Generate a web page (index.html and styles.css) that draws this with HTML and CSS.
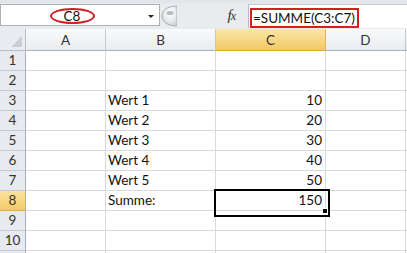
FILE: index.html
```html
<!DOCTYPE html>
<html>
<head>
<meta charset="utf-8">
<link rel="stylesheet" href="styles.css">
</head>
<body>
<div class="app">
  <div class="toolbar">
    <div class="namebox">
      <div class="ref-wrap"><span class="ref">C8</span></div>
      <span class="arrow"></span>
    </div>
    <div class="grip">
      <svg width="17" height="22" viewBox="0 0 17 22">
        <defs>
          <radialGradient id="g" cx="0.55" cy="0.35" r="0.7">
            <stop offset="0" stop-color="#ffffff"/>
            <stop offset="0.6" stop-color="#e7e9ec"/>
            <stop offset="1" stop-color="#c9ced4"/>
          </radialGradient>
        </defs>
        <path d="M17 1 C7 1 2 5.5 2 11 C2 16.5 7 21 17 21 Z" fill="url(#g)" stroke="#a9b0b8" stroke-width="1"/>
        <ellipse cx="10" cy="8" rx="3.5" ry="2" fill="#b7bcc3"/>
      </svg>
    </div>
    <div class="fxarea"><span class="fx">f<span class="fxx">x</span></span></div>
    <div class="formula"><span class="ftext">=SUMME(C3:C7)</span></div>
  </div>
  <div class="sheet">
    <div class="corner"><span class="tri"></span></div>
    <div class="ch">A</div>
    <div class="ch">B</div>
    <div class="ch sel">C</div>
    <div class="ch">D</div>
    <div class="ch">&nbsp;</div>

    <div class="rh">1</div><div class="c"></div><div class="c"></div><div class="c"></div><div class="c"></div><div class="c"></div>
    <div class="rh">2</div><div class="c"></div><div class="c"></div><div class="c"></div><div class="c"></div><div class="c"></div>
    <div class="rh">3</div><div class="c"></div><div class="c">Wert 1</div><div class="c num">10</div><div class="c"></div><div class="c"></div>
    <div class="rh">4</div><div class="c"></div><div class="c">Wert 2</div><div class="c num">20</div><div class="c"></div><div class="c"></div>
    <div class="rh">5</div><div class="c"></div><div class="c">Wert 3</div><div class="c num">30</div><div class="c"></div><div class="c"></div>
    <div class="rh">6</div><div class="c"></div><div class="c">Wert 4</div><div class="c num">40</div><div class="c"></div><div class="c"></div>
    <div class="rh">7</div><div class="c"></div><div class="c">Wert 5</div><div class="c num">50</div><div class="c"></div><div class="c"></div>
    <div class="rh sel">8</div><div class="c"></div><div class="c">Summe:</div><div class="c num active">150<span class="handle"></span></div><div class="c"></div><div class="c"></div>
    <div class="rh">9</div><div class="c"></div><div class="c"></div><div class="c"></div><div class="c"></div><div class="c"></div>
    <div class="rh">10</div><div class="c"></div><div class="c"></div><div class="c"></div><div class="c"></div><div class="c"></div>
    <div class="rh"></div><div class="c"></div><div class="c"></div><div class="c"></div><div class="c"></div><div class="c"></div>
  </div>
</div>
</body>
</html>
```
FILE: styles.css
```css
* { box-sizing: border-box; }
html, body { margin: 0; padding: 0; }
body {
  width: 407px;
  height: 253px;
  overflow: hidden;
  background: #ffffff;
  font-family: Lato, "Liberation Sans", sans-serif;
  color: #000;
}
.app { width: 407px; }

.toolbar {
  height: 29px;
  display: flex;
  align-items: flex-start;
  background: #e9ecef;
  border-top: 3px solid #e2e5e9;
  padding-top: 1px;
}
.namebox {
  width: 160px;
  height: 22px;
  background: #fff;
  border: 1px solid #aab2bc;
  display: flex;
  align-items: center;
}
.ref-wrap {
  width: 142px;
  display: flex;
  justify-content: center;
}
.ref {
  display: inline-block;
  width: 45px;
  height: 16px;
  border: 2px solid #d21f1f;
  border-radius: 50%;
  font-size: 13.5px;
  line-height: 12px;
  text-align: center;
  color: #111;
  margin-top: 1px;
}
.arrow {
  width: 0;
  height: 0;
  margin-left: 5px;
  margin-top: 3px;
  border-left: 3px solid transparent;
  border-right: 3px solid transparent;
  border-top: 3px solid #222;
}
.grip {
  width: 17px;
  height: 22px;
  margin-top: 1px;
  display: flex;
}
.fxarea {
  width: 71px;
  height: 22px;
  display: flex;
  align-items: center;
  justify-content: flex-end;
  padding-right: 13px;
}
.fx {
  font-family: "Liberation Serif", serif;
  font-style: italic;
  font-size: 15px;
  color: #333;
  letter-spacing: -1px;
}
.fxx { font-size: 12px; }
.formula {
  flex: 1;
  height: 24px;
  background: #fff;
  border-left: 1px solid #b3bac3;
  border-top: 1px solid #c5cbd2;
  padding: 2px 0 0 1px;
}
.ftext {
  display: inline-block;
  height: 20px;
  border: 2px solid #d21f1f;
  font-size: 13.5px;
  line-height: 16px;
  padding: 0 2px 0 1px;
  color: #111;
}

.sheet {
  display: grid;
  grid-template-columns: 26px 80px 110px 110px 80px 1fr;
  grid-template-rows: 22px repeat(11, 20px);
  font-size: 13.5px;
}
.corner {
  background: #e9ecf0;
  border-right: 1px solid #b9bfc6;
  border-bottom: 1px solid #b9bfc6;
  position: relative;
}
.tri {
  position: absolute;
  right: 3px;
  bottom: 3px;
  width: 0;
  height: 0;
  border-left: 11px solid transparent;
  border-bottom: 11px solid #c9ced5;
}
.ch {
  background: linear-gradient(#f9fafb, #e9ecef);
  border-right: 1px solid #c3c8ce;
  border-bottom: 1px solid #a9b0b8;
  text-align: center;
  line-height: 21px;
  color: #333;
  padding-top: 1px;
}
.ch.sel {
  background: linear-gradient(#fbe6a8, #f2c963);
  border-bottom-color: #e2a93a;
  border-right-color: #d9b36a;
}
.rh {
  background: #e7eaee;
  border-right: 1px solid #a9b0b8;
  border-bottom: 1px solid #c6cbd1;
  text-align: center;
  line-height: 19px;
  color: #333;
}
.rh.sel {
  background: linear-gradient(#fbe3a0, #f3ca66);
  border-bottom-color: #dcae55;
}
.c {
  border-right: 1px solid #d9d9d9;
  border-bottom: 1px solid #d9d9d9;
  padding: 0 2px;
  line-height: 19px;
  color: #111;
  white-space: nowrap;
}
.c.num { text-align: right; padding-right: 3px; }
.c.active { position: relative; }
.c.active::after {
  content: "";
  position: absolute;
  left: -2px;
  top: -2px;
  width: 112px;
  height: 24px;
  border: 2px solid #000;
}
.handle {
  position: absolute;
  left: 106px;
  top: 17px;
  width: 6px;
  height: 6px;
  background: #000;
  border: 1px solid #fff;
  z-index: 1;
}
```
